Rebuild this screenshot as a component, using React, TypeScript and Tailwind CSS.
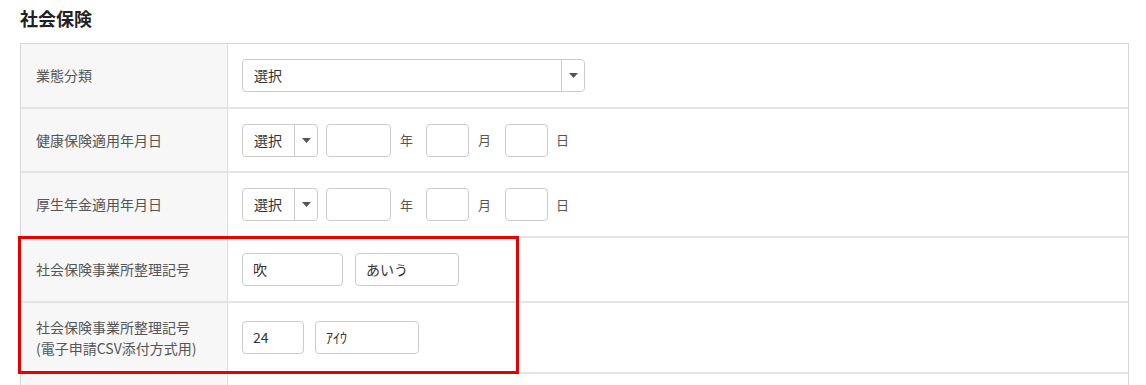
const font = { fontFamily: '"Noto Sans CJK JP", "Noto Sans", sans-serif' };

function Caret() {
  return (
    <svg width="9" height="5" viewBox="0 0 9 5" className="block">
      <path d="M0 0h9L4.5 5z" fill="#555" />
    </svg>
  );
}

function Select({ wide }: { wide?: boolean }) {
  return (
    <div
      className={`flex h-[33px] items-stretch rounded-[4px] border border-[#cccccc] bg-white ${
        wide ? "w-[343px]" : "w-[76px]"
      }`}
    >
      <div className="flex flex-1 items-center pl-[11px] text-[14px] text-[#333]">選択</div>
      <div className="flex w-[23px] items-center justify-center border-l border-[#cccccc]">
        <Caret />
      </div>
    </div>
  );
}

function Field({ w, value }: { w: string; value?: string }) {
  return (
    <div
      className={`flex h-[33px] items-center rounded-[4px] border border-[#cccccc] bg-white pl-[10px] text-[14px] text-[#333] ${w}`}
    >
      {value}
    </div>
  );
}

function DateInputs() {
  return (
    <div className="flex items-center text-[13px] text-[#555]">
      <Select />
      <div className="ml-[8px]">
        <Field w="w-[65px]" />
      </div>
      <span className="ml-[9px] w-[26px]">年</span>
      <Field w="w-[43px]" />
      <span className="ml-[9px] w-[27px]">月</span>
      <Field w="w-[43px]" />
      <span className="ml-[8px]">日</span>
    </div>
  );
}

function Row({ label, h, children }: { label: React.ReactNode; h: string; children?: React.ReactNode }) {
  return (
    <div className={`grid grid-cols-[207px_1fr] border-b-2 border-[#e4e4e4] ${h}`}>
      <div className="flex items-center border-r border-[#dcdcdc] bg-[#f7f7f7] pl-[15px] text-[14px] leading-[21px] text-[#555]">
        {label}
      </div>
      <div className="flex items-center pl-[14px]">{children}</div>
    </div>
  );
}

export default function App() {
  return (
    <div className="relative h-[385px] overflow-hidden bg-white pl-[20px] pt-[6px]" style={font}>
      <h2 className="text-[18px] font-bold leading-[24px] text-[#222]">社会保険</h2>
      <div className="mt-[13px] w-[1109px] border-x border-t border-[#d6d6d6]">
        <Row label="業態分類" h="h-[65px]">
          <Select wide />
        </Row>
        <Row label="健康保険適用年月日" h="h-[64px]">
          <DateInputs />
        </Row>
        <Row label="厚生年金適用年月日" h="h-[65px]">
          <DateInputs />
        </Row>
        <Row label="社会保険事業所整理記号" h="h-[65px]">
          <div className="flex gap-[12px]">
            <Field w="w-[101px]" value="吹" />
            <Field w="w-[104px]" value="あいう" />
          </div>
        </Row>
        <Row
          label={
            <div>
              社会保険事業所整理記号
              <br />
              (電子申請CSV添付方式用)
            </div>
          }
          h="h-[71px]"
        >
          <div className="flex gap-[11px]">
            <Field w="w-[62px]" value="24" />
            <Field w="w-[104px]" value="ｱｲｳ" />
          </div>
        </Row>
        <Row label="" h="h-[40px]" />
      </div>
      <div className="pointer-events-none absolute left-[18px] top-[236px] h-[138px] w-[501px] border-[3px] border-[#e60000]" />
    </div>
  );
}
